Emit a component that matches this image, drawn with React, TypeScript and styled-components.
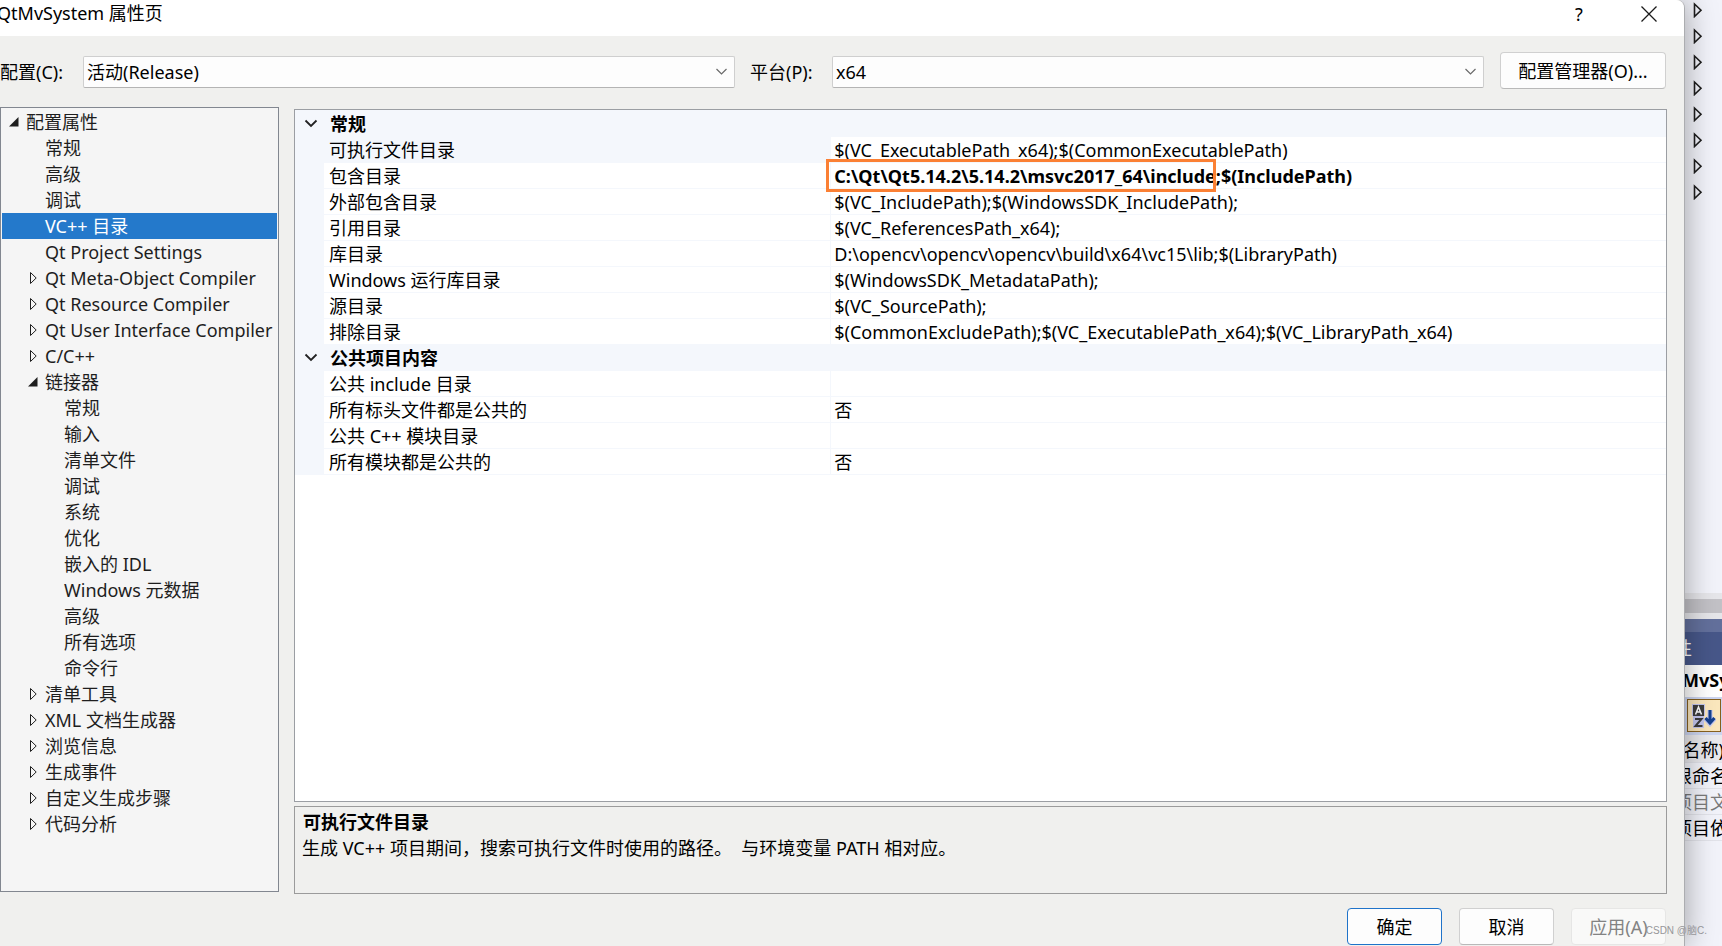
import React from "react";
import styled, { createGlobalStyle, css } from "styled-components";

const GlobalStyle = createGlobalStyle`
  *, *::before, *::after { box-sizing: border-box; }
  html, body, #root { height: 100%; }
  body {
    margin: 0;
    overflow: hidden;
    background: #f2f3fa;
    color: #000;
    font: 18px/26px "Noto Sans", "Noto Sans CJK SC", sans-serif;
  }
  button, select { font: inherit; color: inherit; }
`;

const Desktop = styled.div`
  position: relative;
  display: flex;
  height: 100%;
  min-height: 800px;
  overflow: hidden;
`;

const Dialog = styled.main`
  position: relative;
  z-index: 1;
  flex: 1;
  min-width: 0;
  display: flex;
  flex-direction: column;
  background: #f0f0ee;
  border-right: 1px solid #acadb0;
  border-top-right-radius: 8px;
  box-shadow: 0 0 32px rgba(0, 0, 0, 0.36);
`;

const TitleBar = styled.header`
  display: flex;
  align-items: flex-start;
  height: 36px;
  background: #fff;
  border-top-right-radius: 8px;
`;

const Title = styled.h1`
  flex: 1;
  margin: 0 0 0 -3px;
  font-size: 18px;
  font-weight: 400;
`;

const CaptionButton = styled.button`
  display: grid;
  place-items: center;
  width: 70px;
  height: 27px;
  padding: 0;
  border: 0;
  background: none;
`;

const Toolbar = styled.div`
  display: flex;
  align-items: center;
  padding: 16px 18px 0 0;
`;

const FieldLabel = styled.label<{ $inset?: boolean }>`
  flex: none;
  width: ${(p) => (p.$inset ? 97 : 83)}px;
  padding-top: 2px;
  padding-left: ${(p) => (p.$inset ? 15 : 0)}px;
  white-space: nowrap;
`;

const SelectBox = styled.div`
  position: relative;
  flex: 1;
  height: 32px;
  margin-top: 3px;
  svg {
    position: absolute;
    right: 7px;
    top: 12px;
    pointer-events: none;
  }
`;

const Select = styled.select`
  appearance: none;
  width: 100%;
  height: 32px;
  padding: 0 30px 0 3px;
  border: 1px solid #cfcfcf;
  border-bottom-color: #b4b4b4;
  border-radius: 2px;
  background: #fdfdfd;
`;

const Button = styled.button<{ $wide?: boolean; $primary?: boolean }>`
  flex: none;
  width: ${(p) => (p.$wide ? 166 : 95)}px;
  height: 37px;
  padding: 0;
  border: 1px solid #d0d0d0;
  border-bottom-color: #b9b9b9;
  border-radius: 4px;
  background: #fdfdfd;
  ${(p) => p.$primary && css`border-color: #1f73c9;`}
  &:disabled {
    color: #838383;
    background: #f9f9f8;
    border-color: #e6e6e5;
  }
`;

const ManagerSlot = styled.div`
  margin-left: 16px;
`;

const Content = styled.div`
  flex: 1;
  min-height: 0;
  display: flex;
  gap: 15px;
  padding: 18px 17px 0 0;
`;

const Tree = styled.ul`
  flex: none;
  width: 279px;
  margin: 0 0 2px;
  padding: 1px;
  list-style: none;
  border: 1px solid #828790;
  background: #f5f5f5;
  color: #1e1e1e;
  overflow: hidden;
`;

const TreeItem = styled.button<{ $level: number; $selected?: boolean }>`
  display: flex;
  align-items: center;
  width: 100%;
  height: 26px;
  padding: 0 0 0 ${(p) => 4 + p.$level * 19}px;
  border: 0;
  background: ${(p) => (p.$selected ? "#2479cb" : "none")};
  color: ${(p) => (p.$selected ? "#fff" : "inherit")};
  text-align: left;
  white-space: nowrap;
`;

const Twisty = styled.span`
  display: flex;
  flex: none;
  width: 20px;
`;

const Right = styled.div`
  flex: 1;
  min-width: 0;
  display: flex;
  flex-direction: column;
  gap: 4px;
  padding-top: 2px;
`;

const GridPane = styled.section`
  flex: 1;
  min-height: 0;
  padding-top: 1px;
  border: 1px solid #9b9ea3;
  background: linear-gradient(#f4f7fc 1px, #fff 1px);
  overflow: hidden;
`;

const PropertyTable = styled.table`
  width: 100%;
  table-layout: fixed;
  border-spacing: 0;
  white-space: nowrap;
`;

const Gutter = styled.td`
  height: 26px;
  padding: 0;
  background: #f4f7fc;
  svg { display: block; margin: 0 auto 2px 9px; }
`;

const GroupName = styled.th`
  padding: 0 0 0 6px;
  background: #f4f7fc;
  text-align: left;
  font-weight: 700;
  line-height: 26px;
`;

const NameCell = styled.th<{ $active?: boolean }>`
  padding: 2px 0 0 5px;
  border-right: 1px solid #f4f7fc;
  border-bottom: 1px solid #f4f7fc;
  background: ${(p) => (p.$active ? "#f4f7fc" : "#fff")};
  text-align: left;
  font-weight: 400;
  line-height: 23px;
`;

const ValueCell = styled.td<{ $bold?: boolean }>`
  padding: 2px 0 0 3px;
  border-bottom: 1px solid #f4f7fc;
  font-weight: ${(p) => (p.$bold ? 700 : 400)};
  line-height: 23px;
`;

const Marked = styled.span`
  position: relative;
  display: inline-block;
  &::after {
    content: "";
    position: absolute;
    inset: -6px 0 -4px -8px;
    border: 3px solid #fb8034;
  }
`;

const Description = styled.section`
  height: 88px;
  padding: 2px 7px;
  border: 1px solid #9b9b9b;
  h2, p { margin: 0; font-size: 18px; white-space: pre; }
  h2 { font-weight: 700; padding-left: 1px; }
`;

const Footer = styled.footer`
  display: flex;
  justify-content: flex-end;
  gap: 17px;
  padding: 14px 18px 1px 0;
`;

const Ide = styled.aside`
  flex: none;
  display: flex;
  flex-direction: column;
  width: 48px;
  margin-left: -11px;
  background: #f2f3fa;
  white-space: nowrap;
  overflow: hidden;
`;

const IdeTree = styled.div`
  display: flex;
  flex-direction: column;
  gap: 10px;
  height: 593px;
  padding: 2px 0 0 19px;
  svg { flex: none; }
`;

const Splitter = styled.div`
  height: 26px;
  border: solid #e6e6ea;
  border-width: 6px 0;
  background: #c2c1c6;
`;

const PanelTitle = styled.div`
  height: 46px;
  padding-top: 2px;
  border-top: 13px solid #63709c;
  background: #475789;
  color: #fff;
  line-height: 28px;
`;

const ObjectName = styled.div`
  height: 32px;
  padding-left: 8px;
  background: #fff;
  font-weight: 700;
  line-height: 30px;
`;

const PanelTools = styled.div`
  height: 38px;
  padding: 2px 1px 0 13px;
  background: #ccd5f0;
`;

const SortButton = styled.button`
  display: grid;
  place-items: center;
  width: 34px;
  height: 33px;
  padding: 0;
  border: 1px solid #87611f;
  background: #fbe7bd;
`;

const PanelRow = styled.div<{ $muted?: boolean; $first?: boolean }>`
  height: ${(p) => (p.$first ? 28 : 26)}px;
  padding-top: ${(p) => (p.$first ? 3 : 1)}px;
  padding-left: ${(p) => (p.$first ? 3 : 0)}px;
  border-bottom: 1px solid #e2e3ea;
  background: ${(p) => (p.$first ? "#e9e9ed" : "none")};
  color: ${(p) => (p.$muted ? "#7a7a7a" : "#000")};
  line-height: 25px;
`;

const Watermark = styled.div`
  position: absolute;
  z-index: 2;
  right: 15px;
  bottom: 5px;
  color: #97979a;
  font: 10px/20px "Liberation Sans", "Noto Sans CJK SC", sans-serif;
`;

const Chevron = ({ size, color }: { size: "s" | "m"; color: string }) =>
  size === "s" ? (
    <svg width="13" height="8" viewBox="0 0 13 8" fill="none" stroke={color} strokeWidth="1.2">
      <path d="M1.5 1 6.5 6 11.5 1" />
    </svg>
  ) : (
    <svg width="14" height="9" viewBox="0 0 14 9" fill="none" stroke={color} strokeWidth="1.8">
      <path d="M1.5 1.5 7 7 12.5 1.5" />
    </svg>
  );

const OpenMark = () => (
  <svg width="13" height="10" viewBox="0 0 13 10" fill="#1e1e1e">
    <path d="M12.5 0V9.5H3Z" />
  </svg>
);

const ClosedMark = () => (
  <svg width="13" height="14" viewBox="0 0 13 14" fill="none" stroke="#1e1e1e">
    <path d="M5.5 1.5V12.5L11.2 7Z" />
  </svg>
);

type Node = { text: string; level: number; mark?: "open" | "closed" };

const nodes: Node[] = [
  { text: "配置属性", level: 0, mark: "open" },
  { text: "常规", level: 1 },
  { text: "高级", level: 1 },
  { text: "调试", level: 1 },
  { text: "VC++ 目录", level: 1 },
  { text: "Qt Project Settings", level: 1 },
  { text: "Qt Meta-Object Compiler", level: 1, mark: "closed" },
  { text: "Qt Resource Compiler", level: 1, mark: "closed" },
  { text: "Qt User Interface Compiler", level: 1, mark: "closed" },
  { text: "C/C++", level: 1, mark: "closed" },
  { text: "链接器", level: 1, mark: "open" },
  { text: "常规", level: 2 },
  { text: "输入", level: 2 },
  { text: "清单文件", level: 2 },
  { text: "调试", level: 2 },
  { text: "系统", level: 2 },
  { text: "优化", level: 2 },
  { text: "嵌入的 IDL", level: 2 },
  { text: "Windows 元数据", level: 2 },
  { text: "高级", level: 2 },
  { text: "所有选项", level: 2 },
  { text: "命令行", level: 2 },
  { text: "清单工具", level: 1, mark: "closed" },
  { text: "XML 文档生成器", level: 1, mark: "closed" },
  { text: "浏览信息", level: 1, mark: "closed" },
  { text: "生成事件", level: 1, mark: "closed" },
  { text: "自定义生成步骤", level: 1, mark: "closed" },
  { text: "代码分析", level: 1, mark: "closed" },
];

type Property = { name: string; value: string; marked?: string };

const groups: { title: string; items: Property[] }[] = [
  {
    title: "常规",
    items: [
      { name: "可执行文件目录", value: "$(VC_ExecutablePath_x64);$(CommonExecutablePath)" },
      { name: "包含目录", marked: "C:\\Qt\\Qt5.14.2\\5.14.2\\msvc2017_64\\include", value: ";$(IncludePath)" },
      { name: "外部包含目录", value: "$(VC_IncludePath);$(WindowsSDK_IncludePath);" },
      { name: "引用目录", value: "$(VC_ReferencesPath_x64);" },
      { name: "库目录", value: "D:\\opencv\\opencv\\opencv\\build\\x64\\vc15\\lib;$(LibraryPath)" },
      { name: "Windows 运行库目录", value: "$(WindowsSDK_MetadataPath);" },
      { name: "源目录", value: "$(VC_SourcePath);" },
      { name: "排除目录", value: "$(CommonExcludePath);$(VC_ExecutablePath_x64);$(VC_LibraryPath_x64)" },
    ],
  },
  {
    title: "公共项目内容",
    items: [
      { name: "公共 include 目录", value: "" },
      { name: "所有标头文件都是公共的", value: "否" },
      { name: "公共 C++ 模块目录", value: "" },
      { name: "所有模块都是公共的", value: "否" },
    ],
  },
];

export default function App() {
  return (
    <Desktop>
      <GlobalStyle />
      <Dialog>
        <TitleBar>
          <Title>QtMvSystem 属性页</Title>
          <CaptionButton aria-label="帮助">?</CaptionButton>
          <CaptionButton aria-label="关闭">
            <svg width="16" height="16" viewBox="0 0 16 16" stroke="#1a1a1a" strokeWidth="1.3">
              <path d="M.5.5 15.5 15.5M15.5.5.5 15.5" />
            </svg>
          </CaptionButton>
        </TitleBar>

        <Toolbar>
          <FieldLabel htmlFor="config">配置(C):</FieldLabel>
          <SelectBox>
            <Select id="config" defaultValue="release">
              <option value="release">活动(Release)</option>
            </Select>
            <Chevron size="s" color="#6a6a6a" />
          </SelectBox>
          <FieldLabel htmlFor="platform" $inset>平台(P):</FieldLabel>
          <SelectBox>
            <Select id="platform" defaultValue="x64">
              <option value="x64">x64</option>
            </Select>
            <Chevron size="s" color="#6a6a6a" />
          </SelectBox>
          <ManagerSlot>
            <Button $wide>配置管理器(O)...</Button>
          </ManagerSlot>
        </Toolbar>

        <Content>
          <Tree role="tree">
            {nodes.map((n, i) => (
              <li key={i} role="none">
                <TreeItem role="treeitem" $level={n.level} $selected={n.text === "VC++ 目录"}>
                  <Twisty>
                    {n.mark === "open" && <OpenMark />}
                    {n.mark === "closed" && <ClosedMark />}
                  </Twisty>
                  {n.text}
                </TreeItem>
              </li>
            ))}
          </Tree>

          <Right>
            <GridPane>
              <PropertyTable>
                <colgroup>
                  <col style={{ width: 29 }} />
                  <col style={{ width: "37%" }} />
                  <col />
                </colgroup>
                {groups.map((g, gi) => (
                  <tbody key={g.title}>
                    <tr>
                      <Gutter><Chevron size="m" color="#222" /></Gutter>
                      <GroupName colSpan={2} scope="rowgroup">{g.title}</GroupName>
                    </tr>
                    {g.items.map((p, i) => (
                      <tr key={p.name}>
                        <Gutter />
                        <NameCell scope="row" $active={gi === 0 && i === 0}>{p.name}</NameCell>
                        <ValueCell $bold={!!p.marked}>
                          {p.marked && <Marked>{p.marked}</Marked>}
                          {p.value}
                        </ValueCell>
                      </tr>
                    ))}
                  </tbody>
                ))}
              </PropertyTable>
            </GridPane>
            <Description>
              <h2>可执行文件目录</h2>
              <p>{"生成 VC++ 项目期间，搜索可执行文件时使用的路径。  与环境变量 PATH 相对应。"}</p>
            </Description>
          </Right>
        </Content>

        <Footer>
          <Button $primary>确定</Button>
          <Button>取消</Button>
          <Button disabled>应用(A)</Button>
        </Footer>
      </Dialog>

      <Ide>
        <IdeTree>
          {Array.from({ length: 8 }, (_, i) => (
            <svg key={i} width="10" height="16" viewBox="0 0 10 16" fill="none" stroke="#1e1e1e" strokeWidth="1.6">
              <path d="M1.5 2V14.5L8 8.2Z" />
            </svg>
          ))}
        </IdeTree>
        <Splitter />
        <PanelTitle>性</PanelTitle>
        <ObjectName>MvSystem</ObjectName>
        <PanelTools>
          <SortButton aria-label="按字母顺序">
            <svg width="24" height="24" viewBox="0 0 24 24" fill="none">
              <path d="M0 0H13V12H12V24H1V12H0Z" fill="#c3c6ee" />
              <path d="M1 1H12V12H1Z" fill="#3c3c3c" />
              <path d="M3.5 10.5 6.5 3 9.5 10.5M4.5 8H8.5" stroke="#fff" strokeWidth="1.5" />
              <path d="M3 15H9.5L3.5 22H10.5" stroke="#3c3c3c" strokeWidth="2" />
              <path d="M18 6V19M13.5 14.5 18 19.5 22.5 14.5" stroke="#c3c6ee" strokeWidth="5" />
              <path d="M18 6V19M13.5 14 18 19 22.5 14" stroke="#15408f" strokeWidth="3" />
            </svg>
          </SortButton>
        </PanelTools>
        <PanelRow $first>(名称)</PanelRow>
        <PanelRow>根命名</PanelRow>
        <PanelRow $muted>项目文</PanelRow>
        <PanelRow>项目依</PanelRow>
      </Ide>
      <Watermark>CSDN @脑C.</Watermark>
    </Desktop>
  );
}
